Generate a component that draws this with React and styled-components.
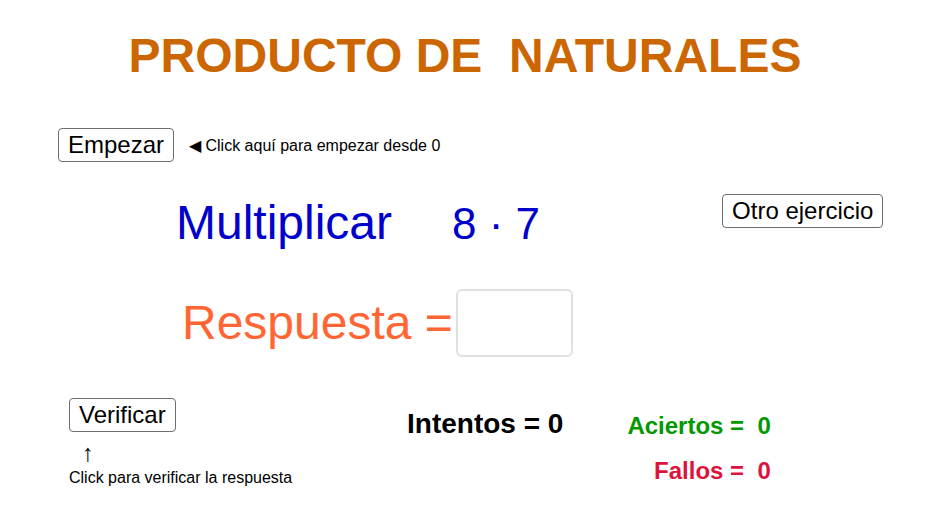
import React from 'react'
import styled, { createGlobalStyle } from 'styled-components'

const Global = createGlobalStyle`
body{
margin:0;
background:#fff;
font-family:"Liberation Sans", Arial, sans-serif;
}
`
const Page = styled.div`
width:952px;
height:521px;
overflow:hidden;
padding-top:28px;
box-sizing:border-box;
`
const Title = styled.h1`
margin:0;
padding-right:22px;
text-align:center;
white-space:pre;
font-size:48px;
line-height:55px;
font-weight:700;
color:#cc6600;
`
const Row = styled.div`
display:flex;
align-items:flex-start;
padding-left:${p => p.$left || 0}px;
margin-top:${p => p.$top || 0}px;
`
const Button = styled.button`
font-family:inherit;
font-size:24px;
line-height:28px;
height:34px;
padding:0 9px;
background:#fff;
color:#000;
border:1px solid #6f6f6f;
border-radius:4px;
margin-top:${p => p.$top || 0}px;
margin-left:${p => p.$left || 0}px;
cursor:pointer;
`
const Hint = styled.span`
font-size:16px;
color:#000;
margin-left:${p => p.$left || 0}px;
margin-top:${p => p.$top || 0}px;
`
const Big = styled.div`
font-size:${p => p.$size}px;
color:${p => p.$color};
margin-top:${p => p.$top || 0}px;
margin-left:${p => p.$left || 0}px;
white-space:pre;
`
const AnswerBox = styled.input`
width:117px;
height:68px;
box-sizing:border-box;
margin-left:3px;
border:2px solid #e0e0e0;
border-radius:6px;
outline:none;
font-family:inherit;
font-size:28px;
`
const LeftCol = styled.div`
width:338px;
display:flex;
flex-direction:column;
align-items:flex-start;
`
const Arrow = styled.span`
font-size:24px;
line-height:24px;
margin:9px 0 0 13px;
`
const Stat = styled.div`
font-weight:700;
font-size:${p => p.$size}px;
color:${p => p.$color};
white-space:pre;
margin-top:${p => p.$top || 0}px;
`
const Stats = styled.div`
display:flex;
flex-direction:column;
align-items:flex-end;
margin-left:64px;
`

export default function App() {
  return (
    <Page>
      <Global />
      <Title>PRODUCTO DE  NATURALES</Title>
      <Row $left={58} $top={45}>
        <Button>Empezar</Button>
        <Hint $left={15} $top={8}>◀ Click aquí para empezar desde 0</Hint>
      </Row>
      <Row $left={176} $top={31}>
        <Big $size={48} $color="#0000cc" $top={2}>Multiplicar</Big>
        <Big $size={44} $color="#0000cc" $left={60} $top={6}>8 · 7</Big>
        <Button $left={182} $top={1}>Otro ejercicio</Button>
      </Row>
      <Row $left={182} $top={39}>
        <Big $size={48} $color="#ff6633" $top={6}>Respuesta =</Big>
        <AnswerBox type="text" />
      </Row>
      <Row $left={69} $top={41}>
        <LeftCol>
          <Button>Verificar</Button>
          <Arrow>↑</Arrow>
          <Hint $top={4}>Click para verificar la respuesta</Hint>
        </LeftCol>
        <Stat $size={28} $color="#000" $top={10}>Intentos = 0</Stat>
        <Stats>
          <Stat $size={24} $color="#009900" $top={14}>Aciertos =  0</Stat>
          <Stat $size={24} $color="#dc143c" $top={17}>Fallos =  0</Stat>
        </Stats>
      </Row>
    </Page>
  )
}
